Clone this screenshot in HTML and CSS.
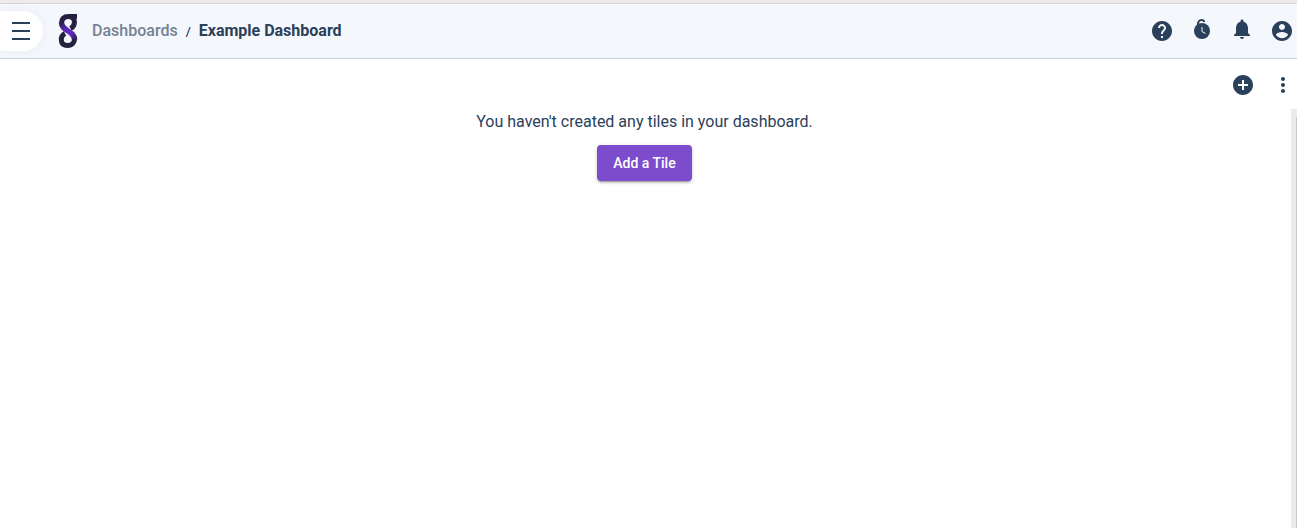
FILE: index.html
```html
<!DOCTYPE html>
<html lang="en">
<head>
<meta charset="utf-8">
<meta name="viewport" content="width=device-width, initial-scale=1">
<title>Example Dashboard</title>
<link rel="stylesheet" href="styles.css">
</head>
<body>
<header class="topbar">
  <button class="menu-button" type="button" aria-label="Menu">
    <svg width="20" height="20" viewBox="0 0 20 20"><path d="M1 1h18v2H1zM1 9h18v2H1zM1 17h18v2H1z"/></svg>
  </button>
  <a class="logo" href="#" aria-label="Home">
    <svg width="20" height="36" viewBox="0 0 20 36" fill="none" stroke-width="5">
      <defs>
        <linearGradient id="ribbon" x1="3" y1="11" x2="17" y2="27" gradientUnits="userSpaceOnUse">
          <stop offset="0" stop-color="#352060"/>
          <stop offset=".35" stop-color="#5c28b8"/>
          <stop offset=".65" stop-color="#6029be"/>
          <stop offset="1" stop-color="#2c2050"/>
        </linearGradient>
      </defs>
      <path d="M10 1h9v3.500c0 1.500-1 2.500-3 2.500z" fill="#25203e"/>
      <path d="M12.500 15.500C18 12.500 18 3.500 10.500 3.500 5 3.500 3.500 7 3.500 10.500" stroke="#25203e"/>
      <path d="M7 20.500C2 23 1.500 32.500 9.500 32.500c5 0 7-3.500 7-6.500" stroke="#25203e"/>
      <path d="M3.500 9.500C3.500 18.500 16.500 17.500 16.500 26.500" stroke="url(#ribbon)" stroke-width="5.500"/>
    </svg>
  </a>
  <nav class="breadcrumb" aria-label="Breadcrumb">
    <a class="crumb" href="#">Dashboards</a>
    <span class="separator">/</span>
    <span class="current">Example Dashboard</span>
  </nav>
  <div class="actions">
    <button class="icon-button" type="button" aria-label="Help">
      <svg width="24" height="24" viewBox="0 0 24 24"><path d="M12 2C6.480 2 2 6.480 2 12s4.480 10 10 10 10-4.480 10-10S17.520 2 12 2zm1 17h-2v-2h2v2zm2.070-7.750-.9.920C13.450 12.900 13 13.500 13 15h-2v-.5c0-1.100.45-2.100 1.170-2.830l1.240-1.260c.37-.36.59-.86.590-1.410 0-1.100-.9-2-2-2s-2 .9-2 2H8c0-2.210 1.790-4 4-4s4 1.790 4 4c0 .88-.36 1.680-.93 2.250z"/></svg>
    </button>
    <button class="icon-button" type="button" aria-label="Recent activity">
      <svg width="24" height="24" viewBox="0 0 24 24"><circle cx="12" cy="12" r="8"/><path class="handle" d="M8 6.500C7.500 2.500 9.500 1 11.500 1c1.500 0 2.500.7 2.700 2"/><path class="hands" d="M12 8v4.500l3.500 2"/></svg>
    </button>
    <button class="icon-button" type="button" aria-label="Notifications">
      <svg class="raised" width="24" height="24" viewBox="0 0 24 24"><path d="M12 22c1.100 0 2-.9 2-2h-4c0 1.100.9 2 2 2zm6-6v-5c0-3.070-1.630-5.640-4.500-6.320V4c0-.83-.67-1.500-1.500-1.500s-1.500.67-1.500 1.500v.68C7.640 5.360 6 7.920 6 11v5l-2 2v1h16v-1l-2-2z"/></svg>
    </button>
    <button class="icon-button" type="button" aria-label="Account">
      <svg width="24" height="24" viewBox="0 0 24 24"><path d="M12 2C6.480 2 2 6.480 2 12s4.480 10 10 10 10-4.480 10-10S17.520 2 12 2zm0 3c1.660 0 3 1.340 3 3s-1.340 3-3 3-3-1.340-3-3 1.340-3 3-3zm0 14.200c-2.500 0-4.710-1.280-6-3.220.03-1.990 4-3.080 6-3.080 1.990 0 5.970 1.090 6 3.080-1.290 1.940-3.500 3.220-6 3.220z"/></svg>
    </button>
  </div>
</header>
<div class="toolbar">
  <button class="icon-button" type="button" aria-label="Add tile">
    <svg width="24" height="24" viewBox="0 0 24 24"><path d="M12 2C6.480 2 2 6.480 2 12s4.480 10 10 10 10-4.480 10-10S17.520 2 12 2zm5 11h-4v4h-2v-4H7v-2h4V7h2v4h4v2z"/></svg>
  </button>
  <button class="icon-button" type="button" aria-label="More options">
    <svg width="24" height="24" viewBox="0 0 24 24"><path d="M12 8c1.100 0 2-.9 2-2s-.9-2-2-2-2 .9-2 2 .9 2 2 2zm0 2c-1.100 0-2 .9-2 2s.9 2 2 2 2-.9 2-2-.9-2-2-2zm0 6c-1.100 0-2 .9-2 2s.9 2 2 2 2-.9 2-2-.9-2-2-2z"/></svg>
  </button>
</div>
<div class="viewport">
  <main class="empty-state">
    <p class="message">You haven't created any tiles in your dashboard.</p>
    <button class="add-button" type="button">Add a Tile</button>
  </main>
  <div class="scroll-track" aria-hidden="true"><div class="scroll-thumb"></div></div>
</div>
</body>
</html>
```
FILE: styles.css
```css
* { box-sizing: border-box; }

body {
  display: flex;
  flex-direction: column;
  min-height: 100vh;
  margin: 0;
  border-top: 3px solid #eeeceb;
  background: #fff;
  color: #2b405a;
  font-family: Roboto, sans-serif;
  font-size: 16px;
  line-height: 24px;
}

button {
  padding: 0;
  border: 0;
  background: none;
  color: inherit;
  font: inherit;
  cursor: pointer;
}

svg { display: block; fill: currentColor; }

.topbar {
  display: flex;
  align-items: center;
  height: 56px;
  border-top: 1px solid #d5d6dc;
  border-bottom: 1px solid #c9cfde;
  background: #f4f7fc;
}

.menu-button {
  display: flex;
  align-items: center;
  justify-content: flex-end;
  width: 43px;
  height: 40px;
  padding-right: 12px;
  border-radius: 0 20px 20px 0;
  background: #fff;
  box-shadow: 0 0 12px rgba(38, 63, 90, 0.05);
}

.logo { margin-left: 15px; }
.logo svg { fill: none; }

.breadcrumb {
  display: flex;
  align-items: baseline;
  gap: 8px;
  margin-left: 14px;
  font-weight: 500;
}

.crumb { color: #748294; text-decoration: none; }
.separator { font-size: 13px; }
.current { font-weight: 700; }

.actions {
  display: flex;
  gap: 16px;
  margin-left: auto;
  padding-right: 3px;
}

.icon-button { width: 24px; height: 24px; }
.raised { margin-top: -4px; }

.handle, .hands { fill: none; stroke: currentColor; stroke-width: 2; }
.hands { stroke: #f4f7fc; stroke-width: 1; }

.toolbar {
  display: flex;
  align-items: center;
  justify-content: flex-end;
  gap: 16px;
  height: 50px;
  padding: 2px 2px 0 0;
}

.viewport { display: flex; flex: 1; }

.empty-state {
  display: flex;
  flex: 1;
  flex-direction: column;
  align-items: center;
  gap: 11px;
  padding: 1px 2px 0 0;
}

.message { margin: 0; }

.add-button {
  height: 36px;
  padding: 0 16px;
  border-radius: 4px;
  background: #7d4ccd;
  box-shadow: 0 3px 1px -2px rgba(0, 0, 0, 0.2), 0 2px 2px rgba(0, 0, 0, 0.14), 0 1px 5px rgba(0, 0, 0, 0.12);
  color: #fff;
  font-size: 14px;
  font-weight: 500;
}

.scroll-track {
  display: flex;
  justify-content: flex-end;
  width: 6px;
  padding-top: 8px;
  background: #ebebeb;
}

.scroll-thumb { width: 1px; background: #c8c8c8; }
```
